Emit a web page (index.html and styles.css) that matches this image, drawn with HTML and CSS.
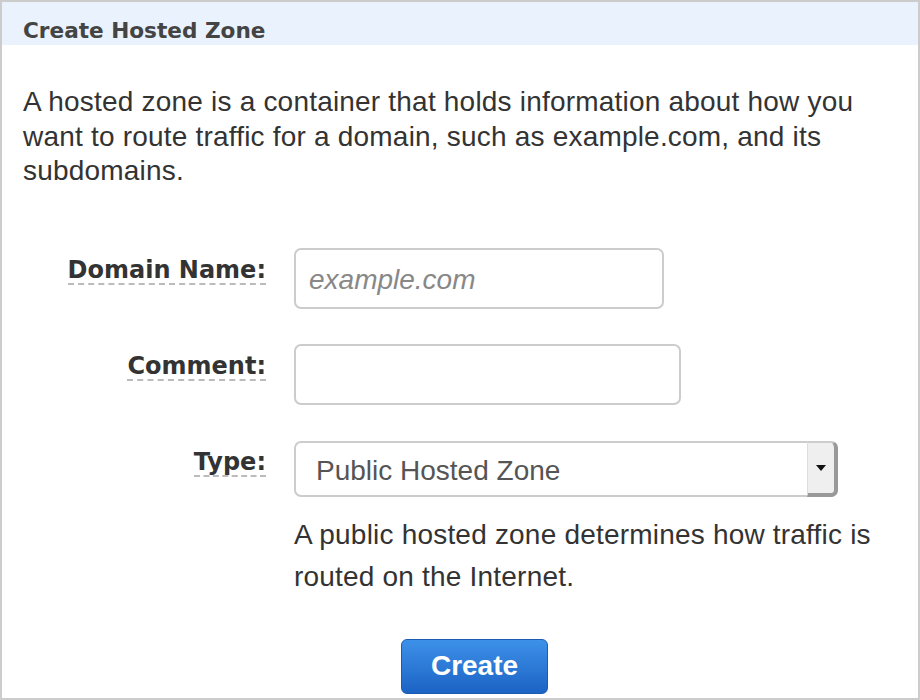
FILE: index.html
```html
<!DOCTYPE html>
<html lang="en">
<head>
    <meta charset="UTF-8">
    <title>Create Hosted Zone</title>
    <link rel="stylesheet" href="styles.css">
</head>
<body>
    <div class="panel">
        <div class="panel-header">
            <h1>Create Hosted Zone</h1>
        </div>
        <div class="panel-body">
            <p class="intro">A hosted zone is a container that holds information about how you want to route traffic for a domain, such as example.com, and its subdomains.</p>

            <div class="form">
                <div class="form-label"><label for="domainName">Domain Name:</label></div>
                <div class="form-field">
                    <input type="text" id="domainName" class="input input-domain" placeholder="example.com">
                </div>

                <div class="form-label"><label for="comment">Comment:</label></div>
                <div class="form-field">
                    <input type="text" id="comment" class="input input-comment">
                </div>

                <div class="form-label"><label for="zoneType">Type:</label></div>
                <div class="form-field">
                    <div class="select-wrap">
                        <select id="zoneType" class="select">
                            <option>Public Hosted Zone</option>
                            <option>Private Hosted Zone for Amazon VPC</option>
                        </select>
                        <span class="select-arrow"></span>
                    </div>
                    <p class="help">A public hosted zone determines how traffic is routed on the Internet.</p>
                </div>
            </div>

            <div class="actions">
                <button class="btn-create">Create</button>
            </div>
        </div>
    </div>
</body>
</html>
```

FILE: styles.css
```css
body {
    margin: 0;
    font-family: "Liberation Sans", Arial, sans-serif;
    color: #333;
    background: #fff;
}

.panel {
    height: 700px;
    box-sizing: border-box;
    border: 2px solid #ccc;
}

.panel-header {
    height: 43px;
    box-sizing: border-box;
    padding: 16px 21px 0;
    background: #eaf2fd;
}

.panel-header h1 {
    margin: 0;
    font-family: "DejaVu Sans", Verdana, sans-serif;
    font-size: 21.6px;
    font-weight: 700;
    line-height: 26px;
    color: #444;
}

.panel-body {
    padding: 0 25px 0 21px;
}

.intro {
    margin: 40px 0 0;
    font-size: 28px;
    line-height: 34.5px;
    letter-spacing: 0.2px;
    color: #333;
}

.form {
    margin-top: 59px;
    display: grid;
    grid-template-columns: 243px 1fr;
    column-gap: 28px;
    row-gap: 35px;
}

.form-label {
    text-align: right;
    padding-top: 9px;
}

.form-label label {
    display: inline-block;
    font-family: "DejaVu Sans", Verdana, sans-serif;
    font-size: 24px;
    font-weight: 700;
    line-height: 26px;
    color: #333;
    padding-bottom: 0;
    border-bottom: 2px dashed #bbb;
}

.input {
    display: block;
    box-sizing: border-box;
    height: 61px;
    padding: 4px 13px 0;
    border: 2px solid #ccc;
    border-radius: 7px;
    font-family: "Liberation Sans", Arial, sans-serif;
    font-size: 28px;
    color: #333;
    outline: none;
}

.input::placeholder {
    font-style: italic;
    color: #888;
}

.input-domain {
    width: 370px;
}

.input-comment {
    width: 387px;
}

.select-wrap {
    position: relative;
    width: 544px;
    height: 56px;
    margin-top: 1px;
}

.select {
    -webkit-appearance: none;
    appearance: none;
    width: 100%;
    height: 100%;
    box-sizing: border-box;
    padding: 3px 20px 0;
    border: 2px solid #ccc;
    border-radius: 7px;
    background: #fff;
    font-family: "Liberation Sans", Arial, sans-serif;
    font-size: 28px;
    color: #555;
}

.select-arrow {
    position: absolute;
    top: 0;
    right: 0;
    bottom: 0;
    width: 31px;
    box-sizing: border-box;
    background: #efefef;
    border-top: 2px solid #ccc;
    border-left: 1px solid #ddd;
    border-right: 4px solid #999;
    border-bottom: 4px solid #999;
    border-radius: 0 7px 7px 0;
    display: flex;
    align-items: center;
    justify-content: center;
    pointer-events: none;
}

.select-arrow::after {
    content: "";
    border-left: 5px solid transparent;
    border-right: 5px solid transparent;
    border-top: 6px solid #111;
}

.help {
    margin: 17px 0 0;
    font-size: 28px;
    line-height: 42px;
    letter-spacing: 0.2px;
    color: #333;
}

.actions {
    margin-top: 41px;
    padding-left: 378px;
}

.btn-create {
    width: 147px;
    height: 55px;
    border: 1px solid #1a5cb2;
    border-radius: 6px;
    background: linear-gradient(#3d91e9, #1c63c4);
    color: #fff;
    font-family: "Liberation Sans", Arial, sans-serif;
    font-size: 28px;
    font-weight: 700;
    cursor: pointer;
}
```
